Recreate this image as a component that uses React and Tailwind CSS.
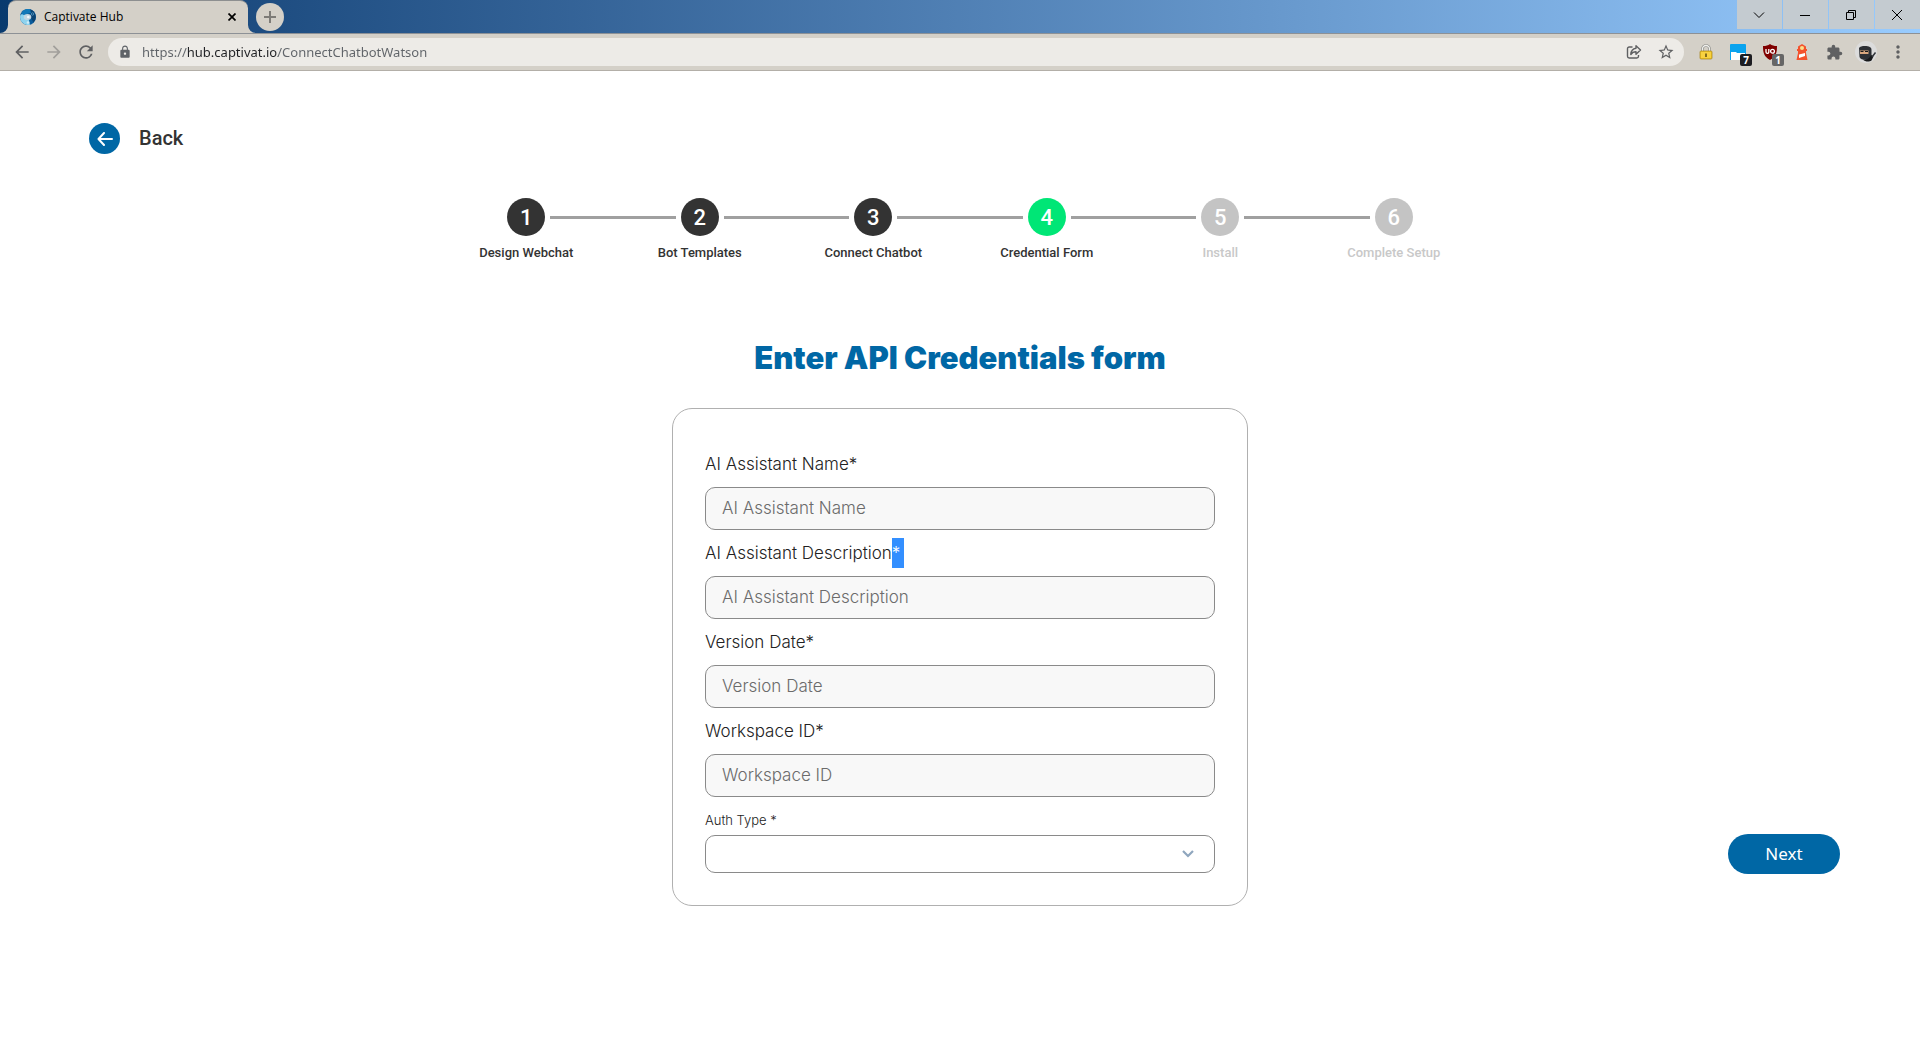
import React from "react";
import {
  MdArrowBack,
  MdArrowForward,
  MdExtension,
  MdLock,
  MdMoreVert,
  MdRefresh,
  MdStarBorder,
} from "react-icons/md";

const STEPS = [
  { label: "Design Webchat", state: "done" },
  { label: "Bot Templates", state: "done" },
  { label: "Connect Chatbot", state: "done" },
  { label: "Credential Form", state: "current" },
  { label: "Install", state: "todo" },
  { label: "Complete Setup", state: "todo" },
];

const CIRCLE = { done: "bg-[#333333]", current: "bg-[#00e676]", todo: "bg-[#c4c4c4]" };
const CAPTION = { done: "text-[#333333]", current: "text-[#333333]", todo: "text-[#c8c8c8]" };

const FIELDS = [
  { id: "name", label: "AI Assistant Name" },
  { id: "description", label: "AI Assistant Description", selected: true },
  { id: "version", label: "Version Date" },
  { id: "workspace", label: "Workspace ID" },
];

function Favicon() {
  return (
    <svg viewBox="0 0 16 16" className="size-4 shrink-0" aria-hidden="true">
      <circle cx="8" cy="8" r="8" fill="#0a5c9c" />
      <path d="M8 0a8 8 0 0 1 5.500 13.500L11 9 6 4Z" fill="#0b4272" />
      <path d="M.2 6.500A8 8 0 0 0 10 15.700L9 11 3 4Z" fill="#8fd3ee" />
      <path d="M1.500 4a8 8 0 0 1 8.500-4l1 4-4 1-4 1Z" fill="#1278b8" />
      <ellipse cx="7.500" cy="8" rx="3.800" ry="3" fill="#c3d6e2" />
      <circle cx="8.300" cy="8" r="1.300" fill="#f2f6f8" />
      <circle cx="12.500" cy="5" r="1.200" fill="none" stroke="#5fa9d6" strokeWidth=".7" />
      <circle cx="8" cy="13.500" r="1.300" fill="#d3ecf6" />
    </svg>
  );
}

function TabFlare({ flip }) {
  return (
    <svg viewBox="0 0 8 8" className={flip ? "size-2 shrink-0 self-end -scale-x-100" : "size-2 shrink-0 self-end"} aria-hidden="true">
      <path d="M8 0v8H0a8 8 0 0 0 8-8Z" fill="#d4d0c8" />
    </svg>
  );
}

function WindowButton({ label, children }) {
  return (
    <button aria-label={label} className="flex h-[29px] w-[45px] items-center justify-center bg-[#c4cbd0] pr-0.5">
      <svg viewBox="0 0 12 12" className="size-3 overflow-visible" fill="none" stroke="#000" strokeWidth="1" aria-hidden="true">
        {children}
      </svg>
    </button>
  );
}

function ToolButton({ label, children }) {
  return (
    <button aria-label={label} className="flex size-8 shrink-0 items-center justify-center text-[#5f6062]">
      {children}
    </button>
  );
}

function Badge({ className, children }) {
  return (
    <span className={`absolute left-[10px] top-[10px] flex size-3 items-center justify-center rounded-[2px] font-['Open_Sans',sans-serif] text-[10px] font-bold leading-3 text-white ${className}`}>
      {children}
    </span>
  );
}

function TitleBar() {
  return (
    <div className="flex h-[33px] justify-between bg-linear-to-r from-[#083a6e] to-[#99ccff]">
      <div className="flex">
        <TabFlare />
        <div className="flex w-60 items-center gap-2 rounded-t-lg border-t border-[#8d8f90] bg-[#d4d0c8] pl-3 pr-2">
          <Favicon />
          <span className="grow text-xs text-black">Captivate Hub</span>
          <button aria-label="Close tab" className="flex size-4 items-center justify-center">
            <svg viewBox="0 0 8 8" className="size-2" stroke="#000" strokeWidth="1.700" aria-hidden="true">
              <path d="m.5.5 7 7M7.500.5l-7 7" />
            </svg>
          </button>
        </div>
        <TabFlare flip />
        <button aria-label="New tab" className="mt-[3px] flex size-7 items-center justify-center rounded-full bg-[#d4d0c8]">
          <svg viewBox="0 0 12 12" className="size-3" stroke="#7d7b77" strokeWidth="2" aria-hidden="true">
            <path d="M6 0v12M0 6h12" />
          </svg>
        </button>
      </div>
      <div className="flex gap-px">
        <WindowButton label="Search tabs">
          <path d="m1 3.500 5 5 5-5" />
        </WindowButton>
        <WindowButton label="Minimize">
          <path d="M1 6.500h10" />
        </WindowButton>
        <WindowButton label="Restore">
          <path d="M1.500 3.500h7v7h-7zM3.500 3.500v-2h7v7h-2" />
        </WindowButton>
        <WindowButton label="Close">
          <path d="m1 1 10 10M11 1 1 11" />
        </WindowButton>
      </div>
    </div>
  );
}

function Toolbar() {
  return (
    <div className="flex h-[38px] items-center border-y border-t-[#8d9196] border-b-[#b3afa8] bg-[#d4d0c8] px-1.5">
      <ToolButton label="Go back">
        <MdArrowBack size={20} />
      </ToolButton>
      <button aria-label="Go forward" disabled className="flex size-8 items-center justify-center text-[#a19f9b]">
        <MdArrowForward size={20} />
      </button>
      <ToolButton label="Reload">
        <MdRefresh size={20} />
      </ToolButton>
      <div className="mx-1.5 flex h-7 grow items-center rounded-full bg-[#edebe7] pl-2.5 pr-0.5 text-[#5f6368]">
        <MdLock size={14} />
        <input
          aria-label="Address"
          type="text"
          defaultValue="https://hub.captivat.io/ConnectChatbotWatson"
          className="ml-2.5 min-w-0 grow bg-[linear-gradient(to_right,#5f6368_46px,#202124_46px,#202124_136px,#5f6368_136px)] bg-clip-text pt-0.5 font-['Noto_Sans',sans-serif] text-[13px] text-transparent outline-none"
        />
        <ToolButton label="Share">
          <svg viewBox="0 0 16 16" className="size-4" fill="none" stroke="currentColor" strokeWidth="1.400" aria-hidden="true">
            <path d="M6.500 3H3.200A1.700 1.700 0 0 0 1.500 4.700v7.600A1.700 1.700 0 0 0 3.200 14h7.600a1.700 1.700 0 0 0 1.700-1.700V11" />
            <path d="M10 1.800 14.500 6 10 10.200V7.800C7.500 7.800 6 8.700 4.800 10.500 5 7 6.800 4.800 10 4.300Z" strokeLinejoin="round" />
          </svg>
        </ToolButton>
        <ToolButton label="Bookmark this page">
          <MdStarBorder size={18} />
        </ToolButton>
      </div>
      <ToolButton label="Password extension">
        <svg viewBox="0 0 16 16" className="size-4" aria-hidden="true">
          <path d="M4.500 8V5a3.500 3.500 0 0 1 7 0v3" fill="none" stroke="#8c8c88" strokeWidth="2.600" />
          <path d="M4.500 8V5a3.500 3.500 0 0 1 7 0v3" fill="none" stroke="#f0f0ec" strokeWidth="1.300" />
          <rect x="2" y="7" width="12" height="8" rx="1" fill="#f3c61c" stroke="#a98a2c" strokeWidth=".8" />
          <path d="M3 9h10M3 11h10M3 13h10" stroke="#ffe578" strokeWidth=".8" />
          <path d="M7.300 9.500h1.400v3.500H7.300z" fill="#54430f" />
        </svg>
      </ToolButton>
      <ToolButton label="Window manager extension, 7">
        <span className="relative size-4">
          <svg viewBox="0 0 16 16" className="size-4" aria-hidden="true">
            <path d="M0 1a1 1 0 0 1 1-1h14a1 1 0 0 1 1 1v15H0Z" fill="#0aa3ee" />
            <path d="M1 8h5l1 1h8v7H1Z" fill="#fff" />
          </svg>
          <Badge className="bg-[#1d1d21]">7</Badge>
        </span>
      </ToolButton>
      <ToolButton label="Ad blocker, 1">
        <span className="relative size-4">
          <svg viewBox="0 0 16 16" className="size-4" aria-hidden="true">
            <path d="M8 0c2 1.500 4 2 7 2 0 7-1 10.500-7 14C2 12.500 1 9 1 2c3 0 5-.5 7-2Z" fill="#800000" />
            <path d="M4 5v3a1.400 1.400 0 0 0 2.800 0V5M6.800 8V5" fill="none" stroke="#fff" strokeWidth="1.300" />
            <circle cx="10.500" cy="7.200" r="1.900" fill="none" stroke="#fff" strokeWidth="1.300" />
          </svg>
          <Badge className="bg-[#666666]">1</Badge>
        </span>
      </ToolButton>
      <ToolButton label="Lighthouse">
        <svg viewBox="0 0 16 16" className="size-4" aria-hidden="true">
          <path d="m8 0 4 2.500V5h1v2h-1v2l1.500 7h-11L4 9V7H3V5h1V2.500Z" fill="#f4522d" />
          <circle cx="8" cy="4" r="2" fill="#fbe08a" />
          <path d="m5 10.500 6-1.500v3L5 14Z" fill="#fff" />
        </svg>
      </ToolButton>
      <ToolButton label="Extensions">
        <MdExtension size={17} />
      </ToolButton>
      <ToolButton label="Profile">
        <svg viewBox="0 0 22 22" className="size-[22px]" aria-hidden="true">
          <circle cx="11" cy="11" r="11" fill="#dcdcdc" />
          <path d="M4 7c1-1.500 3-2 6-2 4 0 6.500 1 6.500 4v6c0 3-2 4-5 4-4 0-6.500-1-7-3Z" fill="#2d3035" />
          <path d="M5 9.500h8.500v3.500H5z" fill="#d9a67e" />
          <path d="M5.500 10.500h3M10 10.500h3" stroke="#17181a" strokeWidth="1" />
          <path d="M8 18.500c2 1 4 .5 6-1.500l2.500-3 2 1.500-2 4c-2 1.500-6.500 1.500-8.500-1Z" fill="#17181a" />
          <path d="m17 16 3.500-4.500" stroke="#30343a" strokeWidth="1.500" />
        </svg>
      </ToolButton>
      <ToolButton label="Menu">
        <MdMoreVert size={20} />
      </ToolButton>
    </div>
  );
}

function Stepper() {
  return (
    <ol className="mx-auto mt-11 grid w-[1041px] max-w-full grid-cols-6 font-[Roboto,sans-serif]">
      {STEPS.map((step, i) => (
        <li key={step.label} className="flex flex-col items-center">
          <div className="flex w-full items-center gap-[5px]">
            <span className={`h-[3px] grow ${i === 0 ? "" : "bg-[#a0a0a0]"}`} />
            <span className={`flex size-[38px] items-center justify-center rounded-full text-[22px] font-medium text-white ${CIRCLE[step.state]}`}>
              {i + 1}
            </span>
            <span className={`h-[3px] grow ${i === STEPS.length - 1 ? "" : "bg-[#a0a0a0]"}`} />
          </div>
          <span className={`mt-[7px] text-[13px] font-medium leading-5 ${CAPTION[step.state]}`}>{step.label}</span>
        </li>
      ))}
    </ol>
  );
}

function Field({ field }) {
  return (
    <>
      <label htmlFor={field.id} className="flex text-[17px] font-light leading-[30px]">
        {field.label}
        <span className={field.selected ? "w-3 bg-[#338fff] text-white" : ""}>*</span>
      </label>
      <input
        id={field.id}
        type="text"
        placeholder={field.label}
        className="my-2 block h-[43px] w-full rounded-[10px] border border-[#8a8a8a] bg-[#f8f8f8] px-4 pb-0.5 text-[17px] font-light outline-none placeholder:text-[#6b6b6b]"
      />
    </>
  );
}

function CredentialForm() {
  return (
    <form
      className="col-start-2 rounded-[20px] border border-[#b0b0b0] px-8 pb-8 pt-10 font-[Inter,sans-serif] text-[#222222]"
      onSubmit={(e) => e.preventDefault()}
    >
      {FIELDS.map((field) => (
        <Field key={field.id} field={field} />
      ))}
      <label htmlFor="auth" className="block text-[13px] font-light leading-[30px]">
        Auth Type *
      </label>
      <div className="relative">
        <select id="auth" className="block h-[38px] w-full appearance-none rounded-[10px] border border-[#8a8a8a] bg-white px-4 outline-none">
          <option value=""></option>
        </select>
        <svg viewBox="0 0 12 8" className="pointer-events-none absolute right-[21px] top-[15px] h-2 w-3" fill="none" stroke="#8fa6be" strokeWidth="2.200" aria-hidden="true">
          <path d="m1 1 5 5 5-5" />
        </svg>
      </div>
    </form>
  );
}

export default function App() {
  return (
    <div className="min-h-screen bg-white font-['Open_Sans',sans-serif]">
      <header>
        <TitleBar />
        <Toolbar />
      </header>
      <main className="pt-[52px]">
        <button className="ml-[89px] flex items-center gap-[19px] font-[Roboto,sans-serif] text-xl font-medium leading-[31px] text-[#333333]">
          <span className="flex size-[31px] items-center justify-center rounded-full bg-[#0067a5]">
            <svg viewBox="0 0 16 14" className="h-[14px] w-4" fill="none" stroke="#fff" strokeWidth="2" strokeLinecap="round" strokeLinejoin="round" aria-hidden="true">
              <path d="M15 7H2M7 1 1.500 7 7 13" />
            </svg>
          </span>
          Back
        </button>
        <Stepper />
        <h1 className="mt-[75px] text-center font-[Inter,sans-serif] text-[31px] font-black leading-10 text-[#0067a5]">
          Enter API Credentials form
        </h1>
        <div className="mt-[30px] grid grid-cols-[1fr_30%_1fr]">
          <CredentialForm />
          <button className="mb-8 mr-20 flex h-10 w-28 items-center justify-center self-end justify-self-end rounded-full bg-[#0067a5] font-['Noto_Sans',sans-serif] text-[17px] text-white">
            Next
          </button>
        </div>
      </main>
    </div>
  );
}
